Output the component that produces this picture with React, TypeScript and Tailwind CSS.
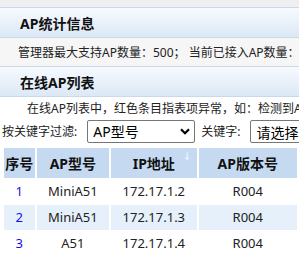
import { useState } from "react";

type ApRow = {
  id: number;
  model: string;
  ip: string;
  version: string;
};

const rows: ApRow[] = [
  { id: 1, model: "MiniA51", ip: "172.17.1.2", version: "R004" },
  { id: 2, model: "MiniA51", ip: "172.17.1.3", version: "R004" },
  { id: 3, model: "A51", ip: "172.17.1.4", version: "R004" },
  { id: 4, model: "A51", ip: "172.17.1.5", version: "R004" },
];

const font = "font-['Noto_Sans','Noto_Sans_CJK_SC',sans-serif]";

function SectionTitle({ title }: { title: string }) {
  return (
    <div className="flex h-[31px] items-center border-y border-[#c9d9ec] bg-gradient-to-b from-[#f7faff] to-[#dce8f6] pl-[20px] pt-[2px] text-[14px] font-bold text-[#111]">
      {title}
    </div>
  );
}

export default function App() {
  const [field, setField] = useState("model");

  return (
    <div className={`h-[257px] w-[299px] overflow-hidden bg-[#f6f6f6] text-[#222] ${font}`}>
      <div className="h-[7px] bg-[#efefef]" />
      <SectionTitle title="AP统计信息" />
      <div className="flex h-[28px] items-center whitespace-nowrap pl-[18px] pt-[1px] text-[12px]">
        管理器最大支持AP数量：500； 当前已接入AP数量：
      </div>
      <SectionTitle title="在线AP列表" />

      <div className="bg-white">
        <div className="flex h-[22px] items-center whitespace-nowrap pl-[27px] pt-[2px] text-[12px]">
          在线AP列表中，红色条目指表项异常，如：检测到AP型号不匹配
        </div>
        <div className="flex h-[25px] items-center whitespace-nowrap pl-[2px] text-[12px]">
          <span className="shrink-0">按关键字过滤:</span>
          <div className="relative ml-[10px] h-[23px] w-[108px] shrink-0">
            <select
              value={field}
              onChange={(e) => setField(e.target.value)}
              className="h-full w-full appearance-none rounded-[2px] border border-[#767676] bg-white pl-[5px] text-[14px] text-black outline-none"
            >
              <option value="model">AP型号</option>
              <option value="ip">IP地址</option>
              <option value="version">AP版本号</option>
            </select>
            <svg
              className="pointer-events-none absolute right-[5px] top-[8px]"
              width="10"
              height="7"
              viewBox="0 0 10 7"
            >
              <path d="M1 1.2 5 5.2 9 1.2" fill="none" stroke="#000" strokeWidth="2.2" />
            </svg>
          </div>
          <span className="ml-[6px] shrink-0">关键字:</span>
          <input
            readOnly
            value="请选择关键字"
            className="ml-[10px] h-[23px] w-[120px] shrink-0 rounded-[2px] border border-[#767676] bg-white pl-[5px] text-[14px] text-black outline-none"
          />
        </div>

        <table className="mt-[3px] ml-[2px] table-fixed border-separate border-spacing-x-[2px] border-spacing-y-[1px] bg-white text-[13px]">
          <colgroup>
            <col className="w-[31px]" />
            <col className="w-[73px]" />
            <col className="w-[86px]" />
            <col className="w-[100px]" />
          </colgroup>
          <thead>
            <tr className="h-[30px] bg-[#c5daf0] text-[14px] font-bold text-[#111]">
              <th className="p-0 pt-[1px] text-center">序号</th>
              <th className="p-0 pt-[1px] text-center">AP型号</th>
              <th className="relative p-0 pt-[1px] text-center">
                IP地址
                <span className="absolute right-[5px] top-[1px] text-[9px] font-normal text-white">↓</span>
              </th>
              <th className="p-0 pt-[1px] text-center">AP版本号</th>
            </tr>
          </thead>
          <tbody>
            {rows.map((item, key) => {
              return (
                <tr
                  key={item.id}
                  className={key % 2 === 1 ? "h-[25px] bg-[#e6f0fb]" : "h-[25px] bg-white"}
                >
                  <td className="p-0 pt-[1px] text-center text-[#1010ee]">{item.id}</td>
                  <td className="p-0 pt-[1px] text-center">{item.model}</td>
                  <td className="p-0 pt-[1px] text-center">{item.ip}</td>
                  <td className="p-0 pt-[1px] text-center">{item.version}</td>
                </tr>
              );
            })}
          </tbody>
        </table>
      </div>
    </div>
  );
}
